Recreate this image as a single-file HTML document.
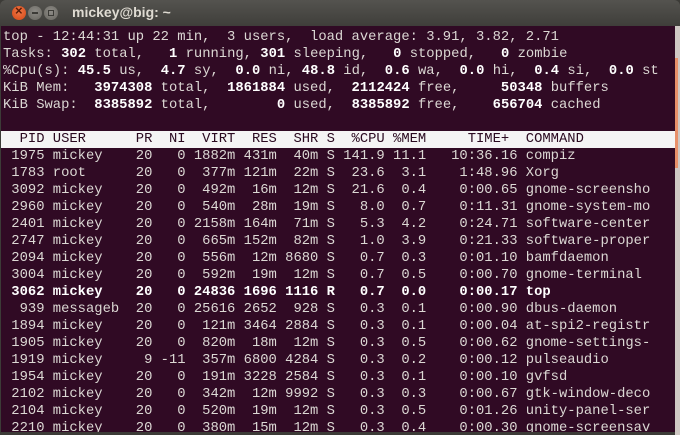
<!DOCTYPE html>
<html><head><meta charset="utf-8"><style>
html,body{margin:0;padding:0;width:680px;height:435px;overflow:hidden;background:#3c3b37;}
.win{position:absolute;left:0;top:0;width:680px;height:435px;}
.title{position:absolute;left:0;top:0;width:680px;height:26px;background:linear-gradient(#54534f,#3f3e3a);border-radius:6px 6px 0 0;}
.ttext{position:absolute;left:72px;top:4px;font:bold 14px "Liberation Sans",sans-serif;color:#dfdbd2;}
.btn{position:absolute;top:6px;width:14px;height:14px;border-radius:50%;}
.close{left:12px;background:radial-gradient(circle at 50% 40%,#f07746,#d34615);}
.min{left:28px;background:radial-gradient(circle at 50% 40%,#8d8b86,#67655f);}
.max{left:44px;background:radial-gradient(circle at 50% 40%,#8d8b86,#67655f);}
.close:after{content:"×";position:absolute;left:3px;top:-3px;font:bold 13px "Liberation Sans",sans-serif;color:#5a1d08;}
.min:after{content:"";position:absolute;left:4px;top:6px;width:6px;height:2px;background:#3c3b37;}
.max:after{content:"";position:absolute;left:4px;top:4px;width:4px;height:4px;border:1px solid #3c3b37;}
.term{position:absolute;left:1px;top:26px;width:674px;height:406px;background:#300a24;overflow:hidden;}
.edge{position:absolute;left:675px;top:26px;width:5px;height:409px;background:#cfc8c4;}
.thumb{position:absolute;left:675px;top:58px;width:3px;height:110px;background:#e8906a;}
pre{margin:0;position:absolute;left:2px;top:3px;font-family:"Liberation Mono",monospace;font-size:13.83px;line-height:17px;color:#dcd8d4;}
b{color:#fff;font-weight:bold;}
.hd{background:#f4f4f4;color:#2a0a20;display:inline-block;width:676px;margin-left:-2px;padding-left:2px;}
</style></head><body><div class="win">
<div class="title"><div class="btn close"></div><div class="btn min"></div><div class="btn max"></div><div class="ttext">mickey@big: ~</div></div>
<div class="term"><pre>top - 12:44:31 up 22 min,  3 users,  load average: 3.91, 3.82, 2.71
Tasks: <b>302</b> total,   <b>1</b> running, <b>301</b> sleeping,   <b>0</b> stopped,   <b>0</b> zombie
%Cpu(s): <b>45.5</b> us,  <b>4.7</b> sy,  <b>0.0</b> ni, <b>48.8</b> id,  <b>0.6</b> wa,  <b>0.0</b> hi,  <b>0.4</b> si,  <b>0.0</b> st
KiB Mem:   <b>3974308</b> total,  <b>1861884</b> used,  <b>2112424</b> free,     <b>50348</b> buffers
KiB Swap:  <b>8385892</b> total,        <b>0</b> used,  <b>8385892</b> free,    <b>656704</b> cached

<span class="hd">  PID USER      PR  NI  VIRT  RES  SHR S  %CPU %MEM     TIME+  COMMAND</span>
 1975 mickey    20   0 1882m 431m  40m S 141.9 11.1   10:36.16 compiz
 1783 root      20   0  377m 121m  22m S  23.6  3.1    1:48.96 Xorg
 3092 mickey    20   0  492m  16m  12m S  21.6  0.4    0:00.65 gnome-screensho
 2960 mickey    20   0  540m  28m  19m S   8.0  0.7    0:11.31 gnome-system-mo
 2401 mickey    20   0 2158m 164m  71m S   5.3  4.2    0:24.71 software-center
 2747 mickey    20   0  665m 152m  82m S   1.0  3.9    0:21.33 software-proper
 2094 mickey    20   0  556m  12m 8680 S   0.7  0.3    0:01.10 bamfdaemon
 3004 mickey    20   0  592m  19m  12m S   0.7  0.5    0:00.70 gnome-terminal
<b> 3062 mickey    20   0 24836 1696 1116 R   0.7  0.0    0:00.17 top</b>
  939 messageb  20   0 25616 2652  928 S   0.3  0.1    0:00.90 dbus-daemon
 1894 mickey    20   0  121m 3464 2884 S   0.3  0.1    0:00.04 at-spi2-registr
 1905 mickey    20   0  820m  18m  12m S   0.3  0.5    0:00.62 gnome-settings-
 1919 mickey     9 -11  357m 6800 4284 S   0.3  0.2    0:00.12 pulseaudio
 1954 mickey    20   0  191m 3228 2584 S   0.3  0.1    0:00.10 gvfsd
 2102 mickey    20   0  342m  12m 9992 S   0.3  0.3    0:00.67 gtk-window-deco
 2104 mickey    20   0  520m  19m  12m S   0.3  0.5    0:01.26 unity-panel-ser
 2210 mickey    20   0  380m  15m  12m S   0.3  0.4    0:00.30 gnome-screensav</pre></div>
<div class="edge"></div><div class="thumb"></div>
</div></body></html>
